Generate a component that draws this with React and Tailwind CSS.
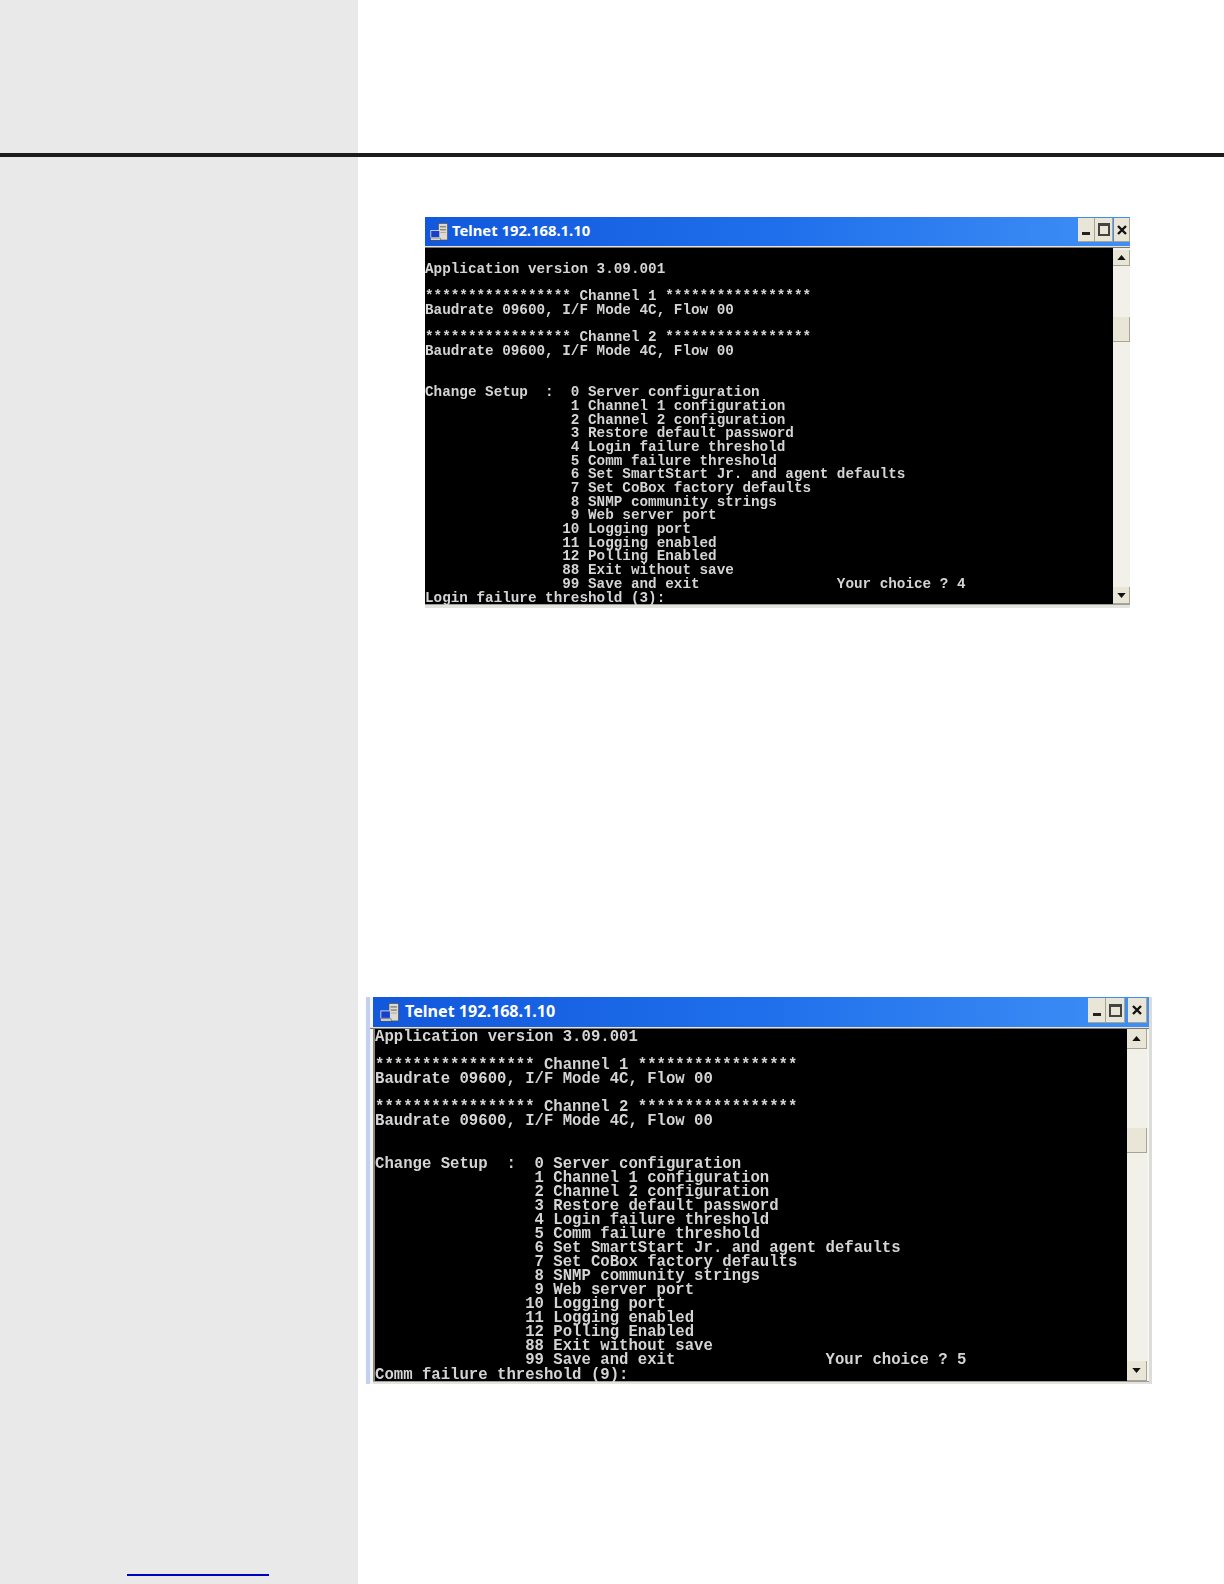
const lines = (last, choice) => [
  "Application version 3.09.001",
  "",
  "***************** Channel 1 *****************",
  "Baudrate 09600, I/F Mode 4C, Flow 00",
  "",
  "***************** Channel 2 *****************",
  "Baudrate 09600, I/F Mode 4C, Flow 00",
  "",
  "",
  "Change Setup  :  0 Server configuration",
  "                 1 Channel 1 configuration",
  "                 2 Channel 2 configuration",
  "                 3 Restore default password",
  "                 4 Login failure threshold",
  "                 5 Comm failure threshold",
  "                 6 Set SmartStart Jr. and agent defaults",
  "                 7 Set CoBox factory defaults",
  "                 8 SNMP community strings",
  "                 9 Web server port",
  "                10 Logging port",
  "                11 Logging enabled",
  "                12 Polling Enabled",
  "                88 Exit without save",
  `                99 Save and exit                Your choice ? ${choice}`,
  last,
];

function TelnetIcon({ className }) {
  return (
    <svg viewBox="0 0 18 18" className={className}>
      <rect x="8.5" y="0.5" width="9" height="16.5" fill="#dedad0" stroke="#4c4a42" strokeWidth="0.6" />
      <rect x="10" y="3" width="6" height="1.4" fill="#8a867a" />
      <rect x="10" y="6" width="6" height="1.4" fill="#8a867a" />
      <rect x="10" y="9" width="6" height="1" fill="#b0ac9f" />
      <rect x="0.8" y="7.5" width="9" height="7" fill="#1840c8" stroke="#e8e8e8" strokeWidth="0.8" />
      <rect x="0.5" y="15" width="10" height="2.2" fill="#d8d4c8" stroke="#33332c" strokeWidth="0.4" />
    </svg>
  );
}

function Triangle({ down }) {
  return (
    <svg viewBox="0 0 10 6" className="w-[9px] h-[5px]">
      <path d={down ? "M0 0H10L5 6Z" : "M0 6H10L5 0Z"} fill="#111" />
    </svg>
  );
}

function Btn({ className, children }) {
  return (
    <div className={`flex items-center justify-center bg-[#e9e6d8] border-r border-b border-[#a7a494] ${className}`}>
      {children}
    </div>
  );
}

function Telnet({ v }) {
  const big = v === 2;
  return (
    <div className={big ? "flex flex-col w-[786px] h-[387px] bg-[#f4f4f0] border-l-[4px] border-l-[#c3d0f2] border-r-[3px] border-r-[#dcdcd8]" : "flex flex-col w-[705px] h-[391px] bg-[#f0f0ea]"}>
      <div className={`shrink-0 flex items-center bg-gradient-to-r from-[#1258dc] via-[#1f6fec] to-[#3f8ff6] ${big ? "h-[30px] ml-[3px] pl-[7px] pr-[2px]" : "h-[29px] pl-[5px]"}`}>
        <TelnetIcon className={big ? "w-[19px] h-[19px]" : "w-[18px] h-[18px]"} />
        <span
          className={`font-bold text-white whitespace-nowrap font-['Noto_Sans',sans-serif] leading-none -mt-[2px] ${big ? "ml-[6px] text-[16.1px]" : "ml-[4px] text-[14.8px]"}`}
        >
          Telnet 192.168.1.10
        </span>
        <div className="ml-auto flex items-start h-full pt-[1px]">
          <Btn className={big ? "w-[18px] h-[25px]" : "w-[17px] h-[24px]"}>
            <div className="w-[8px] h-[3px] bg-[#222] mt-[8px]" />
          </Btn>
          <Btn className={big ? "w-[19px] h-[25px]" : "w-[18px] h-[24px]"}>
            <div className={`border-2 border-[#444] border-t-[3px] ${big ? "w-[13px] h-[13px]" : "w-[12px] h-[13px]"}`} />
          </Btn>
          <div className={big ? "w-[3px]" : "w-[1px]"} />
          <Btn className={big ? "w-[19px] h-[25px]" : "w-[16px] h-[24px]"}>
            <svg viewBox="0 0 10 10" className="w-[10px] h-[10px]">
              <path d="M1 1L9 9M9 1L1 9" stroke="#111" strokeWidth="2.4" />
            </svg>
          </Btn>
        </div>
      </div>
      <div className="shrink-0 h-[2px] bg-[#e6e3d8] border-b border-[#80786c]" />
      <div className={`flex-1 flex min-h-0 ${big ? "ml-[3px] border-l-2 border-[#8a877c] pr-[2px]" : ""}`}>
        <pre
          className={`flex-1 bg-black text-[#d4d4d4] font-bold font-['Liberation_Mono',monospace] blur-[0.35px] ${
            big ? "text-[15.65px] leading-[14.06px] pt-[1px]" : "text-[14.3px] leading-[13.68px] pt-[15px]"
          }`}
        >
          {lines(big ? "Comm failure threshold (9):" : "Login failure threshold (3):", big ? 5 : 4).join("\n")}
        </pre>
        <div className={`shrink-0 flex flex-col bg-[#f1f0e9] ${big ? "w-[20px]" : "w-[17px]"}`}>
          <Btn className={`shrink-0 ${big ? "h-[20px]" : "mt-[2px] h-[16px]"}`}>
            <Triangle />
          </Btn>
          <div className={`shrink-0 ${big ? "h-[79px]" : "h-[51px]"}`} />
          <Btn className="shrink-0 h-[25px]" />
          <div className="flex-1" />
          <Btn className={`shrink-0 ${big ? "h-[20px]" : "h-[17px]"}`}>
            <Triangle down />
          </Btn>
        </div>
      </div>
      <div className={`shrink-0 bg-[#e4e4df] border-t border-[#a0a09a] ${big ? "h-[3px] ml-[3px]" : "h-[4px]"}`} />
    </div>
  );
}

export default function App() {
  return (
    <div className="w-[1224px] h-[1584px] flex flex-col bg-white overflow-hidden">
      <div className="h-[153px] shrink-0">
        <div className="w-[358px] h-full bg-[#e9e9e9]" />
      </div>
      <div className="h-[4px] shrink-0 bg-[#1c1c1c]" />
      <div className="flex-1 flex">
        <div className="w-[358px] shrink-0 bg-[#e9e9e9] flex flex-col justify-end pl-[127px] pb-[8px]">
          <div className="w-[142px] h-[2px] bg-[#0000c0]" />
        </div>
        <div className="flex-1 flex flex-col">
          <div className="ml-[67px] mt-[60px]">
            <Telnet v={1} />
          </div>
          <div className="ml-[8px] mt-[389px]">
            <Telnet v={2} />
          </div>
        </div>
      </div>
    </div>
  );
}
